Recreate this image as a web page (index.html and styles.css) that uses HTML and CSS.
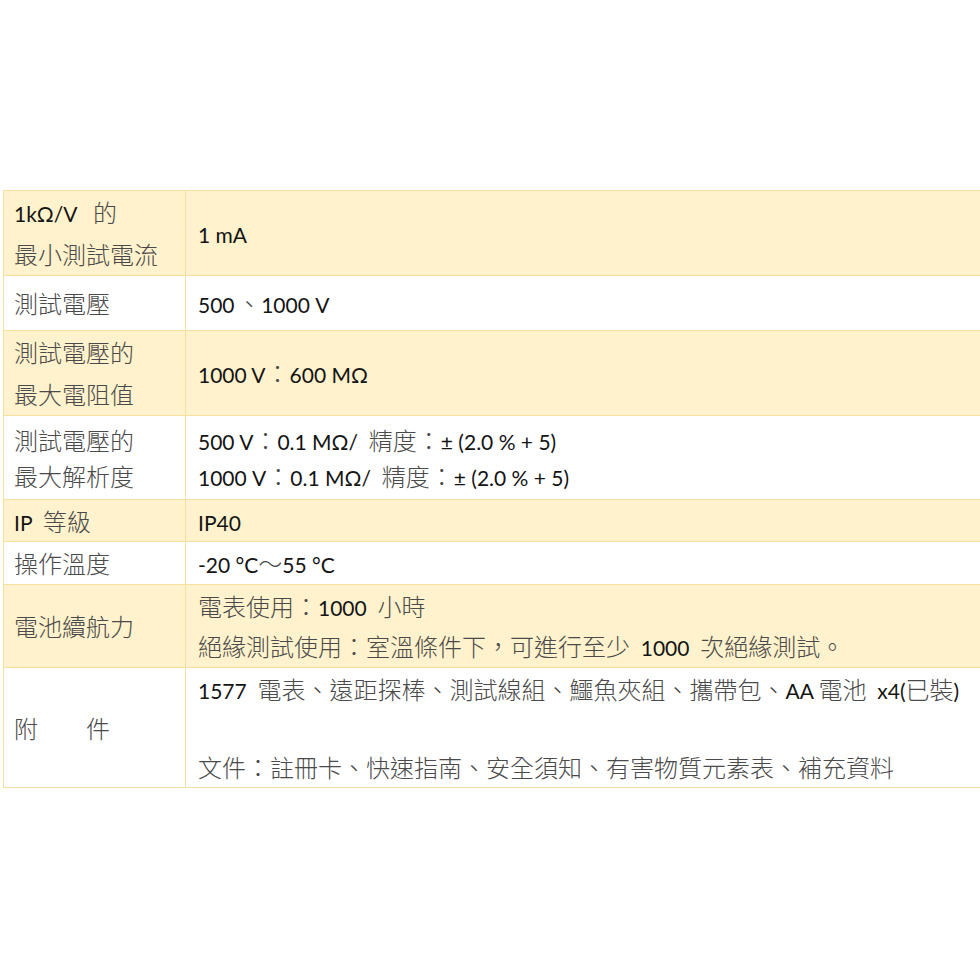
FILE: index.html
```html
<!DOCTYPE html>
<html lang="zh-Hant">
<head>
<meta charset="utf-8">
<title>規格</title>
<link rel="stylesheet" href="styles.css">
</head>
<body>
<div class="page">
  <table class="spec">
    <tr class="y r85 two">
      <td class="k"><span class="n">1kΩ/V&nbsp;&nbsp;&nbsp;</span>的<br>最小測試電流</td>
      <td class="v"><span class="n">1 mA</span></td>
    </tr>
    <tr class="r55">
      <td class="k">測試電壓</td>
      <td class="v"><span class="n">500&thinsp;</span>、<span class="n">1000 V</span></td>
    </tr>
    <tr class="y r84 two">
      <td class="k">測試電壓的<br>最大電阻值</td>
      <td class="v"><span class="n">1000 V</span>：<span class="n">600 MΩ</span></td>
    </tr>
    <tr class="r84 two tight">
      <td class="k">測試電壓的<br>最大解析度</td>
      <td class="v"><span class="n">500 V</span>：<span class="n">0.1 MΩ/&nbsp;&nbsp;</span>精度：<span class="n">± (2.0 % + 5)</span><br><span class="n">1000 V</span>：<span class="n">0.1 MΩ/&nbsp;&nbsp;</span>精度：<span class="n">± (2.0 % + 5)</span></td>
    </tr>
    <tr class="y r42">
      <td class="k"><span class="n">IP&nbsp;&nbsp;</span>等級</td>
      <td class="v"><span class="n">IP40</span></td>
    </tr>
    <tr class="r43">
      <td class="k">操作溫度</td>
      <td class="v"><span class="n">-20 °C</span>～<span class="n">55 °C</span></td>
    </tr>
    <tr class="y r83 two mid">
      <td class="k">電池續航力</td>
      <td class="v">電表使用：<span class="n">1000&nbsp;&nbsp;</span>小時<br>絕緣測試使用：室溫條件下，可進行至少<span class="n">&nbsp;&nbsp;1000&nbsp;&nbsp;</span>次絕緣測試。</td>
    </tr>
    <tr class="r120 three">
      <td class="k">附　　件</td>
      <td class="v"><span class="n">1577&nbsp;&nbsp;</span>電表、遠距探棒、測試線組、鱷魚夾組、攜帶包、<span class="n">AA </span>電池<span class="n">&nbsp;&nbsp;x4(</span>已裝<span class="n">)</span><br><br>文件：註冊卡、快速指南、安全須知、有害物質元素表、補充資料</td>
    </tr>
  </table>
</div>
</body>
</html>
```

FILE: styles.css
```css
html, body {
  margin: 0;
  padding: 0;
  background: #ffffff;
  overflow: hidden;
}

.page {
  width: 980px;
  height: 980px;
  overflow: hidden;
  padding-top: 190px;
  padding-left: 3px;
  box-sizing: border-box;
}

.spec {
  border-collapse: collapse;
  width: 1040px;
  font-family: "Noto Sans CJK TC", "Lato", sans-serif;
  font-size: 24px;
  font-weight: 300;
  color: #4a4a4a;
}

.spec .n {
  font-family: "Lato", "Noto Sans CJK TC", sans-serif;
  font-size: 21px;
  font-weight: 400;
  line-height: 1;
  color: #141414;
}

.spec td {
  border: 1.5px solid #f5e0a2;
  vertical-align: middle;
  padding: 0 12px;
  line-height: 36px;
  white-space: nowrap;
}

.spec td.k {
  width: 159px;
  padding-left: 10px;
}

.spec tr.y td {
  background: #fff2cc;
}

.spec tr.two td { line-height: 42px; }
.spec tr.two.tight td { line-height: 36px; }
.spec tr.two.mid td { line-height: 40px; }
.spec tr.three td { line-height: 39px; }

.r85 { height: 85px; }
.r55 { height: 55px; }
.r84 { height: 84px; }
.r42 { height: 42px; }
.r43 { height: 43px; }
.r83 { height: 83px; }
.r120 { height: 120px; }
```
